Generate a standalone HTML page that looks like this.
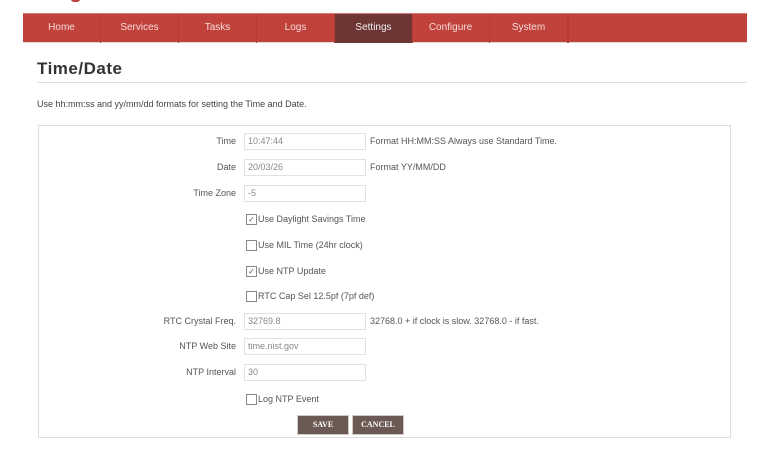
<!DOCTYPE html>
<html><head><style>
body{margin:0;width:761px;height:473px;background:#fff;font-family:"Liberation Sans",sans-serif;color:#444;position:relative;overflow:hidden}
.nav{position:absolute;left:23px;top:13px;width:724px;height:30px;background:#c1413b;border-top:1px solid #d97a74;border-bottom:1px solid #ddd;box-sizing:border-box}
.nav div{position:absolute;top:0;height:29px;width:78px;text-align:center;line-height:27px;font-size:10px;color:#f4dcd9;border-right:1px solid #b53a34;box-sizing:border-box}
.nav .a{background:#6d3634;color:#eee}
h1{position:absolute;left:37px;top:59px;margin:0;font-size:17px;color:#333;letter-spacing:.5px}
.hr{position:absolute;left:37px;top:82px;width:710px;height:1px;background:#ddd}
.p{position:absolute;left:37px;top:99px;font-size:9px;color:#444}
.box{position:absolute;left:38px;top:125px;width:693px;height:313px;border:1px solid #ddd;box-sizing:border-box}
.l{position:absolute;right:525px;font-size:9px;color:#555;text-align:right}
.in{position:absolute;left:244px;width:122px;height:17px;border:1px solid #e2e2e2;box-sizing:border-box;font-size:9px;color:#888;padding-left:3px;line-height:15px}
.h{position:absolute;left:370px;font-size:9px;color:#555}
.cb{position:absolute;left:246px;font-size:9px;color:#555;padding-left:12px}
.cb span{position:absolute;left:0;top:0;width:9px;height:9px;border:1px solid #888;font-size:8px;line-height:9px;text-align:center}
.btn{position:absolute;top:415px;height:18px;background:#6b5954;color:#fff;font-size:8px;font-weight:bold;text-align:center;line-height:18px;font-family:"Liberation Serif",serif;border:1px solid #cfc8c6}
</style></head><body>
<div style="position:absolute;left:71px;top:-4px;width:9px;height:6px;border-radius:4px;background:#c1413b"></div>
<div class="nav">
<div style="left:0">Home</div><div style="left:78px">Services</div><div style="left:156px">Tasks</div><div style="left:234px">Logs</div><div class="a" style="left:312px">Settings</div><div style="left:389px">Configure</div><div style="left:467px">System</div><div style="left:545px;width:1px"></div>
</div>
<h1>Time/Date</h1><div class="hr"></div>
<div class="p">Use hh:mm:ss and yy/mm/dd formats for setting the Time and Date.</div>
<div class="box"></div>
<div class="l" style="top:136px">Time</div><div class="in" style="top:133px">10:47:44</div><div class="h" style="top:136px">Format HH:MM:SS Always use Standard Time.</div>
<div class="l" style="top:162px">Date</div><div class="in" style="top:159px">20/03/26</div><div class="h" style="top:162px">Format YY/MM/DD</div>
<div class="l" style="top:188px">Time Zone</div><div class="in" style="top:185px">-5</div>
<div class="cb" style="top:214px"><span>✓</span>Use Daylight Savings Time</div>
<div class="cb" style="top:240px"><span></span>Use MIL Time (24hr clock)</div>
<div class="cb" style="top:266px"><span>✓</span>Use NTP Update</div>
<div class="cb" style="top:291px"><span></span>RTC Cap Sel 12.5pf (7pf def)</div>
<div class="l" style="top:316px">RTC Crystal Freq.</div><div class="in" style="top:313px">32769.8</div><div class="h" style="top:316px">32768.0 + if clock is slow. 32768.0 - if fast.</div>
<div class="l" style="top:341px">NTP Web Site</div><div class="in" style="top:338px">time.nist.gov</div>
<div class="l" style="top:367px">NTP Interval</div><div class="in" style="top:364px">30</div>
<div class="cb" style="top:394px"><span></span>Log NTP Event</div>
<div class="btn" style="left:297px;width:50px">SAVE</div>
<div class="btn" style="left:352px;width:50px">CANCEL</div>
</body></html>
